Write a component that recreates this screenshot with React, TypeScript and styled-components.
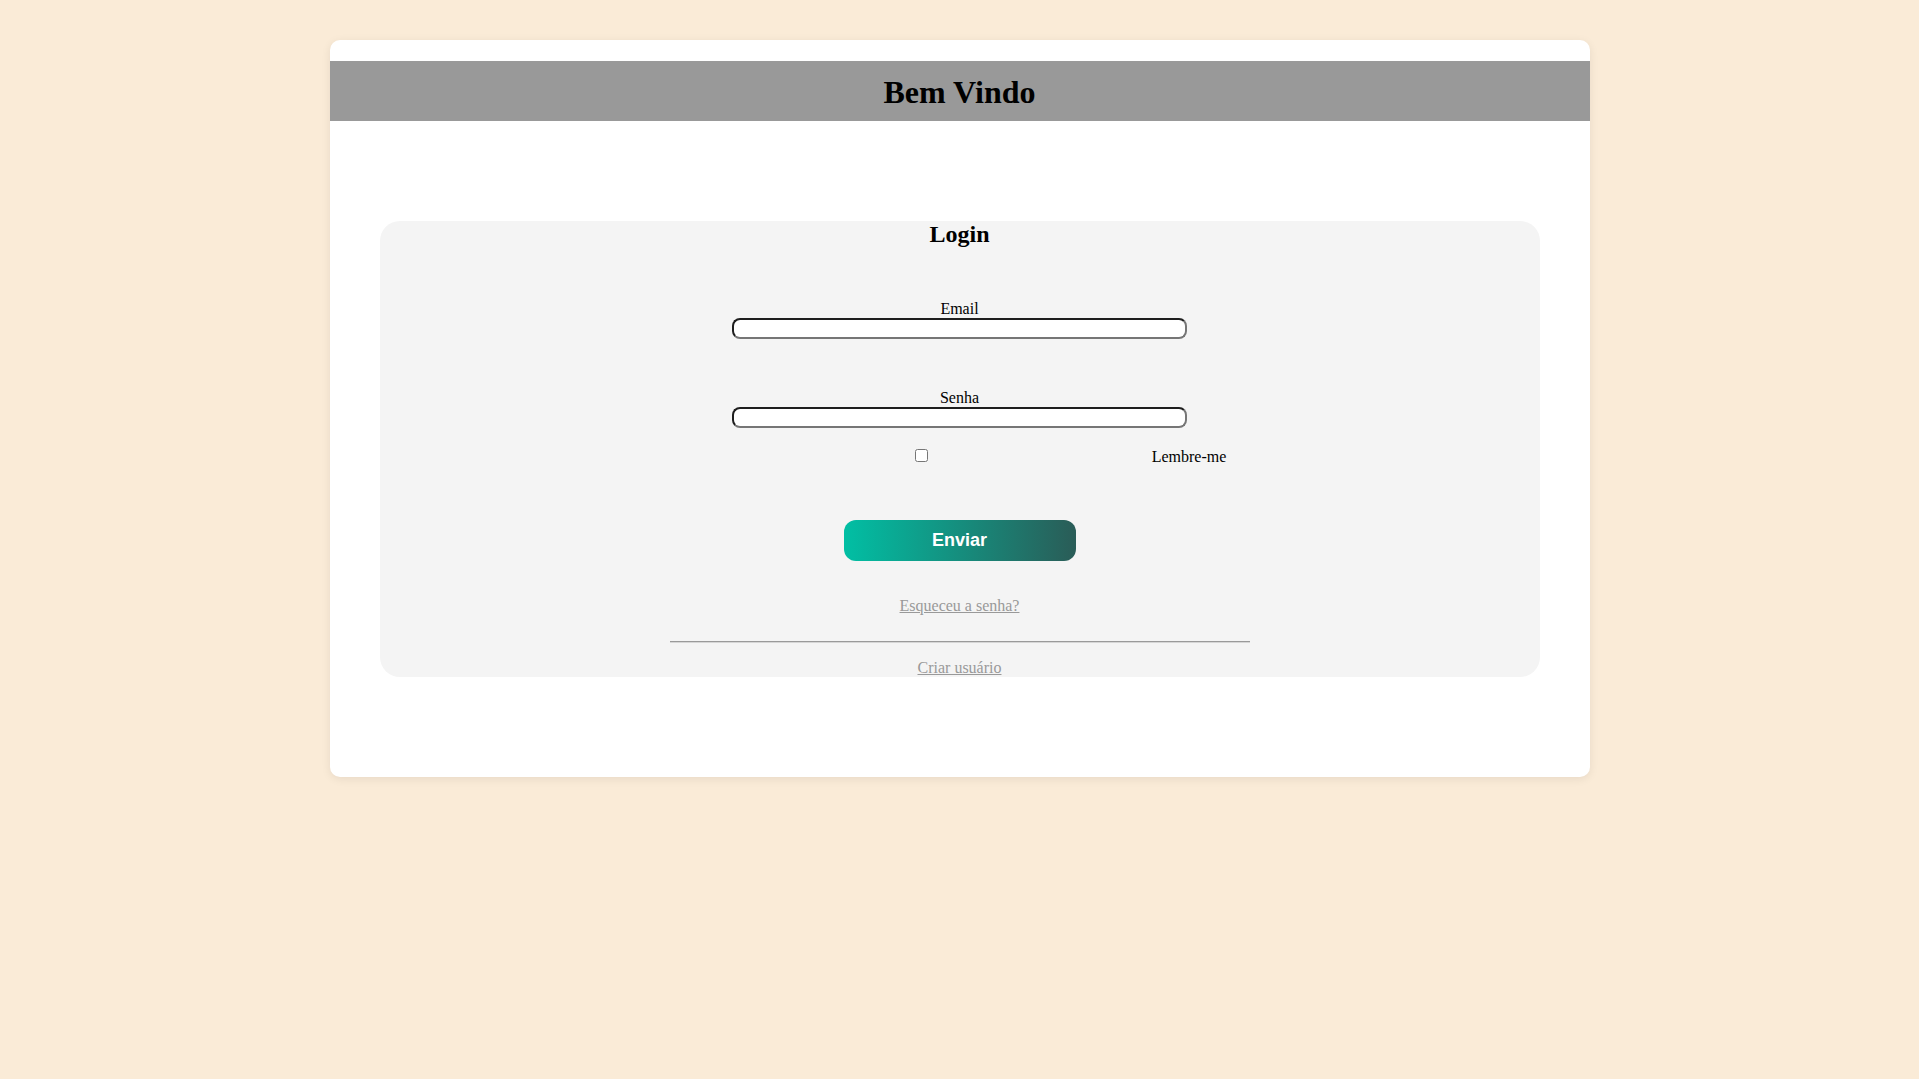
import React from "react";
import styled, { createGlobalStyle } from "styled-components";

const GlobalStyle = createGlobalStyle`
  html, body {
    margin: 0;
    padding: 0;
    background: #faebd7;
    font-family: "Liberation Serif", "Times New Roman", serif;
    font-size: 16px;
    color: #000;
  }
  * { box-sizing: border-box; }
`;

const Page = styled.div`
  padding-top: 40px;
  min-height: 1079px;
`;

const Card = styled.main`
  width: 1260px;
  margin: 0 auto;
  background: #ffffff;
  border-radius: 10px;
  box-shadow: 0 2px 10px rgba(0, 0, 0, 0.08);
  padding: 21px 0 100px;
  display: flex;
  flex-direction: column;
`;

const Header = styled.header`
  height: 60px;
  padding-top: 2px;
  background: #999999;
  display: flex;
  justify-content: center;
`;

const Title = styled.h1`
  margin: 0;
  font-size: 32px;
  line-height: 58px;
  font-weight: bold;
`;

const LoginBox = styled.section`
  margin: 100px 50px 0;
  background: #f4f4f4;
  border-radius: 20px;
  display: flex;
  flex-direction: column;
  align-items: center;
`;

const LoginTitle = styled.h2`
  margin: 0;
  font-size: 24px;
  line-height: 26px;
  font-weight: bold;
`;

const Field = styled.div<{ $top: number }>`
  margin-top: ${(p) => p.$top}px;
  display: flex;
  flex-direction: column;
  align-items: center;
`;

const Label = styled.label`
  font-size: 16px;
  line-height: 18px;
`;

const TextInput = styled.input`
  width: 455px;
  height: 21px;
  padding: 1px 2px;
  border-width: 2px;
  border-style: solid;
  border-color: #1e1e1e #767676 #767676 #1e1e1e;
  border-radius: 8px;
  background: #ffffff;
  font-family: "Liberation Sans", Arial, sans-serif;
  font-size: 13px;
  outline: none;
`;

const RememberRow = styled.div`
  margin-top: 20px;
  display: flex;
  align-items: flex-start;
  padding-left: 222px;
`;

const Check = styled.input`
  width: 13px;
  height: 13px;
  margin: 1px 224px 0 0;
`;

const RememberLabel = styled.label`
  line-height: 18px;
`;

const SubmitButton = styled.button`
  margin-top: 54px;
  width: 232px;
  height: 41px;
  border: none;
  border-radius: 12px;
  background: linear-gradient(90deg, #01bfa4 0%, #2a5c57 100%);
  color: #ffffff;
  font-family: "Liberation Sans", Arial, sans-serif;
  font-weight: bold;
  font-size: 18px;
  cursor: pointer;
`;

const TextLink = styled.a<{ $top: number }>`
  margin-top: ${(p) => p.$top}px;
  color: #999999;
  text-decoration: underline;
  font-size: 16px;
  line-height: 18px;
`;

const Divider = styled.hr`
  margin: 26px 0 0;
  width: 50%;
  border: none;
  border-top: 1px solid #9a9a9a;
  border-bottom: 1px solid #d6d6d6;
  height: 0;
`;

export default function App() {
  return (
    <>
      <GlobalStyle />
      <Page>
        <Card>
          <Header>
            <Title>Bem Vindo</Title>
          </Header>
          <LoginBox>
            <LoginTitle>Login</LoginTitle>
            <Field $top={53}>
              <Label htmlFor="email">Email</Label>
              <TextInput id="email" type="email" />
            </Field>
            <Field $top={50}>
              <Label htmlFor="senha">Senha</Label>
              <TextInput id="senha" type="password" />
            </Field>
            <RememberRow>
              <Check id="lembre" type="checkbox" />
              <RememberLabel htmlFor="lembre">Lembre-me</RememberLabel>
            </RememberRow>
            <SubmitButton type="button">Enviar</SubmitButton>
            <TextLink $top={36} href="#">Esqueceu a senha?</TextLink>
            <Divider />
            <TextLink $top={16} href="#">Criar usuário</TextLink>
          </LoginBox>
        </Card>
      </Page>
    </>
  );
}
